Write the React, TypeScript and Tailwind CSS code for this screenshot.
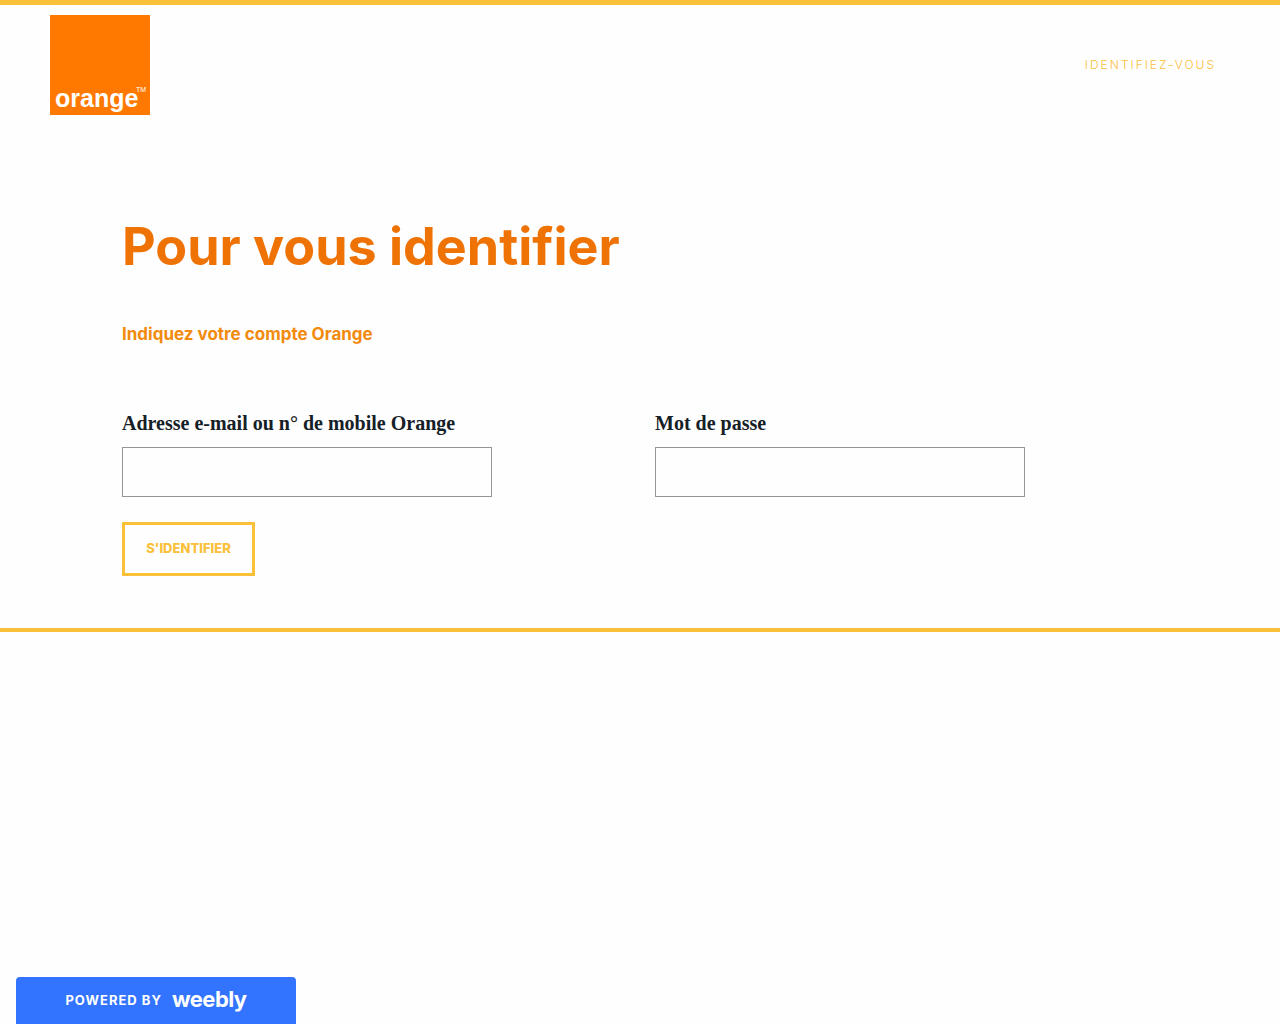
import { FC } from "react";

interface FieldProps {
  id: string;
  label: string;
  type: string;
}

const Field: FC<FieldProps> = ({ id, label, type }) => (
  <div className="max-w-[370px]">
    <label
      className="block mb-3 text-[20px] leading-6 font-bold text-[#162027] font-['Liberation_Serif',serif]"
      htmlFor={id}
    >
      {label}
    </label>
    <input
      id={id}
      name={id}
      type={type}
      className="block w-full h-[50px] px-3 border border-[#959595] focus:outline-none focus:border-[#fac039]"
    />
  </div>
);

const OrangeLogo: FC = () => (
  <a href="#" aria-label="Orange" className="block">
    <svg width="100" height="100" viewBox="0 0 100 100">
      <rect width="100" height="100" fill="#ff7900" />
      <text
        x="5"
        y="92"
        fill="#fff"
        fontSize="25"
        fontWeight="700"
        fontFamily="'Liberation Sans', Arial, sans-serif"
      >
        orange
      </text>
      <text
        x="86"
        y="77"
        fill="#fff"
        fontSize="7"
        fontFamily="'Liberation Sans', Arial, sans-serif"
      >
        TM
      </text>
    </svg>
  </a>
);

const App: FC = () => {
  return (
    <div className="flex flex-col min-h-screen bg-[#fefefe] font-[Inter,sans-serif]">
      <header className="flex items-center justify-between py-[10px] pl-[50px] pr-16 border-t-[5px] border-[#fac039]">
        <OrangeLogo />
        <nav>
          <a
            href="#"
            className="block text-[12px] leading-4 font-light tracking-[2px] uppercase text-[#fac039]"
          >
            Identifiez-vous
          </a>
        </nav>
      </header>

      <main className="pb-[52px] border-b-4 border-[#fac039]">
        <div className="w-full max-w-[1066px] px-[15px] pt-[92px] mx-auto">
          <h1 className="text-[52px] leading-[60px] font-bold text-[#ef7205]">
            Pour vous identifier
          </h1>
          <h2 className="mt-[45px] text-[17px] leading-6 font-bold text-[#f28a0d]">
            Indiquez votre compte Orange
          </h2>
          <form className="mt-[65px]">
            <div className="grid grid-cols-1 gap-[30px] md:grid-cols-2">
              <Field
                id="login"
                type="text"
                label="Adresse e-mail ou n° de mobile Orange"
              />
              <Field id="password" type="password" label="Mot de passe" />
            </div>
            <button
              type="button"
              className="w-[133px] h-[54px] mt-[25px] text-[13px] font-extrabold uppercase border-[3px] border-[#fac039] text-[#fac039]"
            >
              S'identifier
            </button>
          </form>
        </div>
      </main>

      <footer className="px-4 mt-auto">
        <a
          href="#"
          className="flex items-center justify-center w-[280px] h-[47px] gap-[10px] text-white bg-[#3274ff] rounded-t"
        >
          <span className="text-[13px] font-bold tracking-[1px] uppercase">
            Powered by
          </span>
          <span className="pb-1 text-[22px] leading-6 font-bold tracking-tight">
            weebly
          </span>
        </a>
      </footer>
    </div>
  );
};

export default App;
